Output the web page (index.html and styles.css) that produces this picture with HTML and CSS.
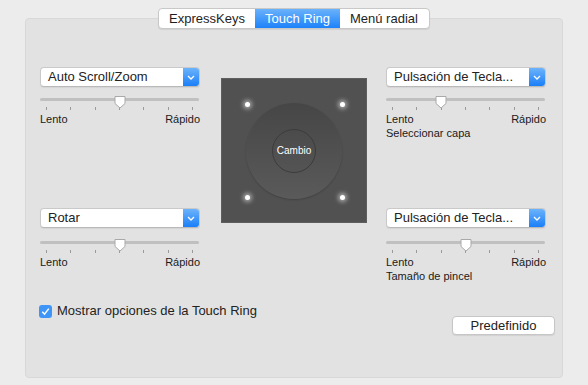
FILE: index.html
```html
<!DOCTYPE html>
<html lang="es">
<head>
  <meta charset="UTF-8" />
  <title>Touch Ring</title>
  <link rel="stylesheet" href="styles.css">
</head>
<body>
  <div class="window">
    <nav class="tabs">
      <span class="tab">ExpressKeys</span>
      <span class="tab active">Touch Ring</span>
      <span class="tab">Menú radial</span>
    </nav>

    <section class="panel">
      <div class="grid">
        <div class="control">
          <div class="popup">
            <span class="popup-text">Auto Scroll/Zoom</span>
            <span class="popup-arrow"><svg width="8" height="5" viewBox="0 0 8 5"><path d="M1 1l3 3 3-3" fill="none" stroke="#fff" stroke-width="1.3"/></svg></span>
          </div>
          <div class="slider">
            <div class="track"></div>
            <div class="rail">
              <div class="ticks"><i></i><i></i><i></i><i></i><i></i><i></i><i></i></div>
              <svg class="thumb" style="left: 50%" width="13" height="14" viewBox="0 0 13 14"><path d="M1.5 1.5h10v7l-5 4.5-5-4.5z" fill="#fff" stroke="#a9a9a9"/></svg>
            </div>
          </div>
          <div class="labels"><span>Lento</span><span>Rápido</span></div>
        </div>

        <div class="pad">
          <span class="led tl"></span>
          <span class="led tr"></span>
          <span class="led bl"></span>
          <span class="led br"></span>
          <div class="ring">
            <div class="hub">Cambio</div>
          </div>
        </div>

        <div class="control">
          <div class="popup">
            <span class="popup-text">Pulsación de Tecla...</span>
            <span class="popup-arrow"><svg width="8" height="5" viewBox="0 0 8 5"><path d="M1 1l3 3 3-3" fill="none" stroke="#fff" stroke-width="1.3"/></svg></span>
          </div>
          <div class="slider">
            <div class="track"></div>
            <div class="rail">
              <div class="ticks"><i></i><i></i><i></i><i></i><i></i><i></i><i></i></div>
              <svg class="thumb" style="left: 33.33%" width="13" height="14" viewBox="0 0 13 14"><path d="M1.5 1.5h10v7l-5 4.5-5-4.5z" fill="#fff" stroke="#a9a9a9"/></svg>
            </div>
          </div>
          <div class="labels"><span>Lento</span><span>Rápido</span></div>
          <div class="caption">Seleccionar capa</div>
        </div>

        <div class="control low">
          <div class="popup">
            <span class="popup-text">Rotar</span>
            <span class="popup-arrow"><svg width="8" height="5" viewBox="0 0 8 5"><path d="M1 1l3 3 3-3" fill="none" stroke="#fff" stroke-width="1.3"/></svg></span>
          </div>
          <div class="slider">
            <div class="track"></div>
            <div class="rail">
              <div class="ticks"><i></i><i></i><i></i><i></i><i></i><i></i><i></i></div>
              <svg class="thumb" style="left: 50%" width="13" height="14" viewBox="0 0 13 14"><path d="M1.5 1.5h10v7l-5 4.5-5-4.5z" fill="#fff" stroke="#a9a9a9"/></svg>
            </div>
          </div>
          <div class="labels"><span>Lento</span><span>Rápido</span></div>
        </div>

        <div class="control low">
          <div class="popup">
            <span class="popup-text">Pulsación de Tecla...</span>
            <span class="popup-arrow"><svg width="8" height="5" viewBox="0 0 8 5"><path d="M1 1l3 3 3-3" fill="none" stroke="#fff" stroke-width="1.3"/></svg></span>
          </div>
          <div class="slider">
            <div class="track"></div>
            <div class="rail">
              <div class="ticks"><i></i><i></i><i></i><i></i><i></i><i></i><i></i></div>
              <svg class="thumb" style="left: 50%" width="13" height="14" viewBox="0 0 13 14"><path d="M1.5 1.5h10v7l-5 4.5-5-4.5z" fill="#fff" stroke="#a9a9a9"/></svg>
            </div>
          </div>
          <div class="labels"><span>Lento</span><span>Rápido</span></div>
          <div class="caption">Tamaño de pincel</div>
        </div>
      </div>

      <div class="footer">
        <label class="check">
          <svg width="13" height="13" viewBox="0 0 13 13"><rect x="0" y="0" width="13" height="13" rx="3" fill="#3d95f7"/><path d="M3.3 6.8l2.2 2.4 4.3-5.6" fill="none" stroke="#fff" stroke-width="1.5"/></svg>
          <span>Mostrar opciones de la Touch Ring</span>
        </label>
        <button class="btn">Predefinido</button>
      </div>
    </section>
  </div>
</body>
</html>
```

FILE: styles.css
```css
body {
  margin: 0;
  background: #ececec;
  font-family: "Liberation Sans", Arial, sans-serif;
  color: #222;
}
.window {
  padding-top: 8px;
}
.tabs {
  display: flex;
  width: max-content;
  margin: 0 auto;
  position: relative;
  z-index: 1;
  background: #fff;
  border: 1px solid #c8c8c8;
  border-radius: 4px;
  box-shadow: 0 1px 1px rgba(0,0,0,0.08);
  overflow: hidden;
}
.tab {
  font-size: 13px;
  line-height: 19px;
  padding: 0 10px;
  color: #1e1e1e;
}
.tab:last-child {
  padding-right: 11px;
}
.tab.active {
  color: #fff;
  background: linear-gradient(#6ab2fb, #1d82fa);
}
.panel {
  margin: -11px 25px 0;
  height: 360px;
  box-sizing: border-box;
  background: #e2e2e2;
  border: 1px solid #d8d8d8;
  border-radius: 4px;
  padding: 48px 7px 0 14px;
}
.grid {
  display: grid;
  grid-template-columns: 160px 146px 160px;
  grid-template-rows: 141px 96px;
  column-gap: 20px;
}
.popup {
  display: flex;
  height: 20px;
  box-sizing: border-box;
  background: #fff;
  border: 1px solid #c9c9c9;
  border-bottom-color: #b9b9b9;
  border-radius: 4px;
  box-shadow: 0 1px 1px rgba(0,0,0,0.06);
  overflow: hidden;
}
.popup-text {
  flex: 1;
  font-size: 13px;
  line-height: 18px;
  padding-left: 7px;
  white-space: nowrap;
}
.popup-arrow {
  width: 16px;
  display: flex;
  align-items: center;
  justify-content: center;
  background: linear-gradient(#6cb3fb, #1a7ff8);
}
.slider {
  position: relative;
  height: 20px;
  margin-top: 4px;
}
.low .slider {
  margin-top: 6px;
}
.track {
  position: absolute;
  left: 0;
  right: 1px;
  top: 7px;
  height: 3px;
  border-radius: 2px;
  background: #c0c0c0;
}
.rail {
  position: absolute;
  left: 6px;
  right: 7px;
  top: 0;
  bottom: 0;
}
.ticks {
  position: absolute;
  left: 0;
  right: 0;
  top: 16px;
  display: flex;
  justify-content: space-between;
}
.ticks i {
  width: 1px;
  height: 3px;
  background: #9a9a9a;
}
.thumb {
  position: absolute;
  top: 4px;
  transform: translateX(-6.5px);
}
.labels {
  display: flex;
  justify-content: space-between;
  font-size: 11px;
  line-height: 14px;
  color: #1a1a1a;
  margin-top: 1px;
}
.caption {
  font-size: 11px;
  line-height: 14px;
  color: #1a1a1a;
}
.pad {
  grid-row: 1 / span 2;
  grid-column: 2;
  margin: 11px 0 0 1px;
  width: 146px;
  height: 145px;
  box-sizing: border-box;
  background: #515151;
  border: 1px solid #5e5e5e;
  position: relative;
  display: flex;
  align-items: center;
  justify-content: center;
}
.ring {
  width: 96px;
  height: 96px;
  border-radius: 50%;
  background: linear-gradient(#464646, #5a5a5a);
  box-shadow: 0 1px 2px rgba(0,0,0,0.2);
  display: flex;
  align-items: center;
  justify-content: center;
}
.hub {
  width: 44px;
  height: 44px;
  box-sizing: border-box;
  border-radius: 50%;
  border: 1px solid #3c3c3c;
  background: linear-gradient(#4b4b4b, #545454);
  color: #fff;
  font-size: 10px;
  display: flex;
  align-items: center;
  justify-content: center;
}
.led {
  position: absolute;
  width: 5px;
  height: 5px;
  border-radius: 50%;
  background: #fff;
  box-shadow: 0 0 4px 2px rgba(255,255,255,0.5);
}
.led.tl { left: 23px; top: 23px; }
.led.tr { right: 21px; top: 23px; }
.led.bl { left: 23px; bottom: 22px; }
.led.br { right: 21px; bottom: 22px; }
.footer {
  display: flex;
  justify-content: space-between;
  align-items: flex-start;
}
.check {
  display: flex;
  align-items: center;
  gap: 5px;
  font-size: 13px;
  line-height: 14px;
  margin-left: -1px;
}
.btn {
  margin-top: 12px;
  width: 103px;
  height: 19px;
  padding: 0;
  font-family: inherit;
  font-size: 13px;
  color: #222;
  background: #fff;
  border: 1px solid #c6c6c6;
  border-radius: 4px;
  box-shadow: 0 1px 1px rgba(0,0,0,0.08);
}
```
